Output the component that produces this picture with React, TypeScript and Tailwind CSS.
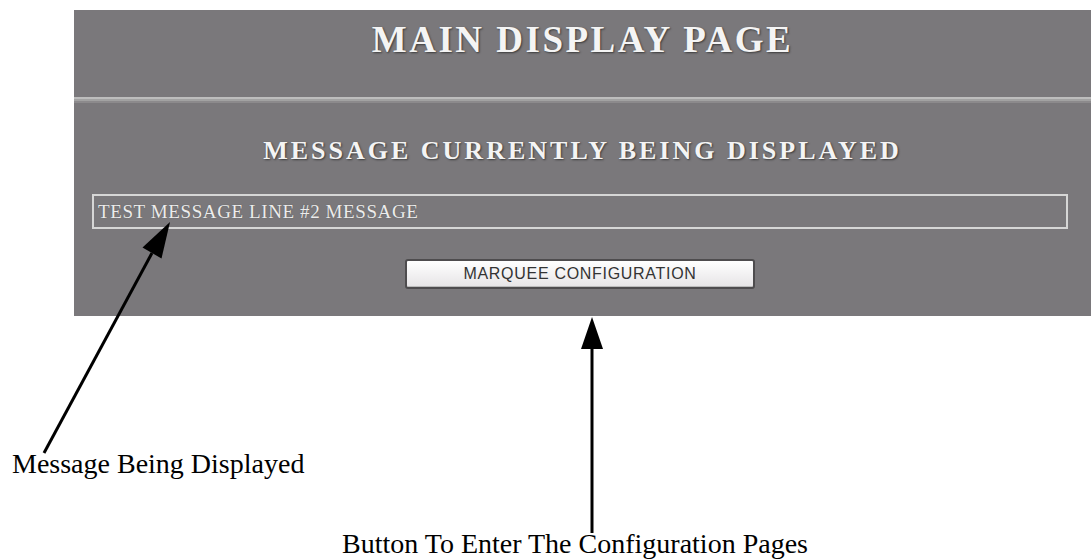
import React from 'react';

// arrows are annotations drawn over the screenshot
const Arrows: React.FC = () => (
  <svg className="absolute inset-0 pointer-events-none" width="1091" height="559" viewBox="0 0 1091 559">
    <polygon points="170,222 142.5,247.5 161.5,258.5" fill="#000" />
    <line x1="152" y1="253" x2="44" y2="453" stroke="#000" strokeWidth="3" />
    <polygon points="592,317 581,349 603,349" fill="#000" />
    <line x1="592" y1="348" x2="592" y2="533" stroke="#000" strokeWidth="3" />
  </svg>
);

const App: React.FC = () => {
  return (
    <div className="relative w-[1091px] h-[559px] bg-white overflow-hidden">
      <div className="pt-[10px] pl-[74px]">
        <div className="bg-[#7a787b]">
          <div className="h-[87px] pt-[11px]">
            <h1 className="text-center leading-none text-[37px] font-bold tracking-[2.5px] text-[#f4f4f4] [font-family:'Liberation_Serif',serif] [text-shadow:1px_1px_2px_#3a3a3a]">
              MAIN DISPLAY PAGE
            </h1>
          </div>
          <div className="h-[2px] bg-[#bdbdbd]" />
          <div className="h-[2px] bg-[#a2a2a2]" />
          <div className="h-[2px] bg-[#8c8a8c]" />

          <h2 className="mt-[35px] h-[26px] text-center leading-none text-[26px] font-bold tracking-[3px] text-[#f4f4f4] [font-family:'Liberation_Serif',serif] [text-shadow:1px_1px_2px_#3a3a3a]">
            MESSAGE CURRENTLY BEING DISPLAYED
          </h2>

          <div className="mt-[30px] ml-[18px] mr-[23px] h-[35px] border-2 border-[#d6d6d6] flex items-center pl-[4px]">
            <span className="text-[19px] leading-none tracking-[0.6px] text-[#ececec] [font-family:'Liberation_Serif',serif] [text-shadow:0_0_1px_#555]">
              TEST MESSAGE LINE #2 MESSAGE
            </span>
          </div>

          <div className="flex justify-center pr-[5px] pt-[30px] pb-[27px]">
            <button className="w-[350px] h-[30px] rounded-[3px] border-2 border-[#4e4c4e] bg-gradient-to-b from-white to-[#e6e4e6] text-[16px] leading-none tracking-[0.7px] text-[#333] [font-family:'Liberation_Sans',sans-serif] shadow-[inset_0_-1px_0_#bbb]">
              MARQUEE CONFIGURATION
            </button>
          </div>
        </div>
      </div>

      <div className="mt-[134px] pl-[12px] h-[28px] text-[28px] leading-none text-black [font-family:'Liberation_Serif',serif]">
        Message Being Displayed
      </div>
      <div className="mt-[52px] pl-[342px] h-[28px] text-[28px] leading-none text-black [font-family:'Liberation_Serif',serif]">
        Button To Enter The Configuration Pages
      </div>

      <Arrows />
    </div>
  );
};

export default App;
